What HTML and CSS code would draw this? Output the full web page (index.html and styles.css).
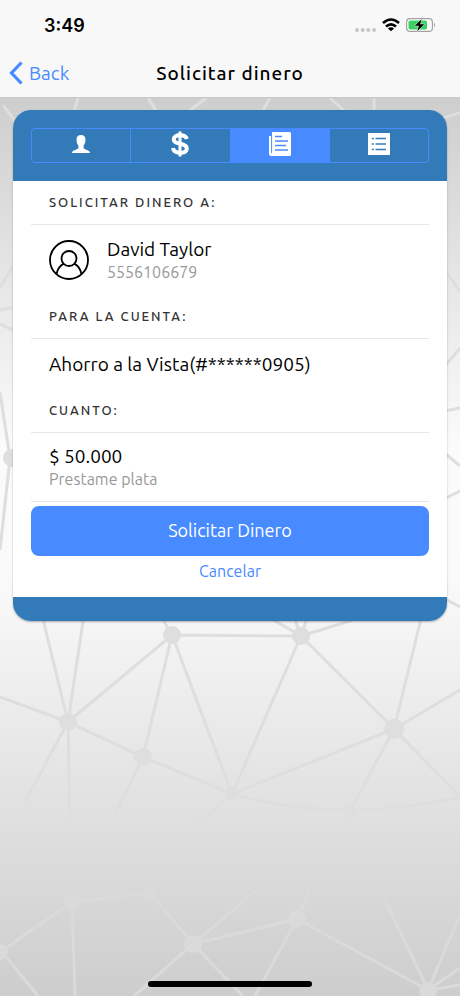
FILE: index.html
```html
<!DOCTYPE html>
<html lang="es">
<head>
    <meta charset="UTF-8">
    <meta name="viewport" content="width=device-width, initial-scale=1.0">
    <title>Solicitar dinero</title>
    <link rel="stylesheet" href="styles.css">
</head>
<body>

    <!-- Network pattern behind the content -->
    <svg class="backdrop" viewBox="0 0 460 996" preserveAspectRatio="xMidYMid slice" aria-hidden="true">
        <g class="lines">
            <path d="M172 635L301 636L394 729L232 794L172 635L68 722L143 757L172 635M143 757L232 794L301 636M172 635L162 618M301 636L270 618M301 636L293 615M301 636L308 615M301 636L353 620"/>
            <path d="M68 722L0 697M68 722L42 615M68 722L84 615M68 722L25 802M68 722L70 830M143 757L115 815M394 729L422 615M394 729L460 690M394 729L350 811M394 729L460 797M232 794Q340 825 460 797M232 794L190 830"/>
            <path class="soft" d="M0 952L72 902L150 893L193 944L297 919L428 990L385 900M2 952L38 996M72 902L75 996M193 944L134 996M193 944L243 996M193 944L280 870M297 919L255 996M297 919L312 885M428 990L460 915M428 990L460 968M428 990L460 985"/>
            <path d="M0 392L10 458L0 550M0 288L20 254M0 310L20 306M0 324L20 333M3 105L20 128M78 98L74 112M148 98L158 114M206 98L188 112M270 98L262 112M330 98L348 114M374 98L374 112M440 119L460 113"/>
            <path d="M440 262L460 292M440 372L460 348M440 412L460 408M440 449L460 466M440 501L460 491M440 596L460 607"/>
        </g>
        <g class="nodes">
            <circle cx="172" cy="635" r="9"/>
            <circle cx="301" cy="636" r="9"/>
            <circle cx="68" cy="722" r="9"/>
            <circle cx="143" cy="757" r="9"/>
            <circle cx="394" cy="729" r="10"/>
            <circle cx="232" cy="793" r="7"/>
            <circle cx="350" cy="811" r="6"/>
            <circle cx="12" cy="458" r="9"/>
            <g class="soft">
                <circle cx="0" cy="952" r="8"/>
                <circle cx="72" cy="902" r="8"/>
                <circle cx="150" cy="893" r="7"/>
                <circle cx="193" cy="944" r="9"/>
                <circle cx="297" cy="919" r="9"/>
                <circle cx="428" cy="991" r="9"/>
            </g>
        </g>
    </svg>

    <header class="top-bar">
        <div class="status-bar">
            <span class="time">3:49</span>
            <div class="status-icons">
                <svg width="21" height="4" viewBox="0 0 21 4" fill="#c6c6c6">
                    <circle cx="2" cy="2" r="2"/><circle cx="7.7" cy="2" r="2"/><circle cx="13.3" cy="2" r="2"/><circle cx="19" cy="2" r="2"/>
                </svg>
                <svg class="wifi" width="18" height="14" viewBox="0 0 18 14" fill="none" stroke="#000" stroke-width="2.6">
                    <path d="M1 5Q9 -2 17 5"/>
                    <path d="M4 8.5Q9 4.2 14 8.5"/>
                    <path d="M9 13.2L5.9 10.5Q9 8 12.1 10.5Z" fill="#000" stroke="none"/>
                </svg>
                <svg class="battery" width="30" height="14" viewBox="0 0 30 14">
                    <rect x="0.6" y="0.6" width="25.8" height="12.8" rx="3.5" fill="#fff" stroke="#a0a0a0" stroke-width="1.2"/>
                    <rect x="2.5" y="2.5" width="18.5" height="9" rx="1.8" fill="#3ad160"/>
                    <path d="M28 4.5Q30 7 28 9.5Z" fill="#a0a0a0"/>
                    <path d="M15.8 1L8.8 7.8H12.8L11.2 13.2L18.3 6.2H14.2Z" fill="#000" stroke="#fff" stroke-width="1" paint-order="stroke"/>
                </svg>
            </div>
        </div>
        <div class="nav-bar">
            <button type="button" class="back">
                <svg width="14" height="24" viewBox="0 0 14 24" fill="none" stroke="currentColor" stroke-width="3.2"><path d="M12.5 1.5L2.5 12L12.5 22.5"/></svg>
                Back
            </button>
            <h1>Solicitar dinero</h1>
        </div>
    </header>

    <main>
        <section class="card">
            <div class="card-header">
                <nav class="segment">
                    <button type="button" aria-label="Persona">
                        <svg width="18" height="18" viewBox="0 0 18 18" fill="currentColor"><path d="M9 0C11.9 0 13.6 1.8 13.5 4.8C13.4 7.4 12.7 9.4 11.6 10.6V13C11.6 14.8 18 14.6 18 18H0C0 14.6 6.4 14.8 6.4 13V10.6C5.3 9.4 4.6 7.4 4.5 4.8C4.4 1.8 6.1 0 9 0Z"/></svg>
                    </button>
                    <button type="button" aria-label="Monto">
                        <svg width="18" height="26" viewBox="0 0 18 26" fill="none" stroke="currentColor" stroke-width="4"><path d="M15.8 8C15.2 5.5 12.8 4.3 9 4.3C5 4.3 2.8 5.8 2.8 8.4C2.8 11.2 5.2 11.9 9 12.7C13 13.5 15.8 14.5 15.8 17.4C15.8 20.2 13 21.7 9 21.7C4.8 21.7 2.4 20 2 17"/><path d="M9 0.5V25.5" stroke-width="3"/></svg>
                    </button>
                    <button type="button" class="active" aria-label="Detalle">
                        <svg width="22" height="24" viewBox="0 0 22 24"><path d="M3 0H20.5Q22 0 22 1.5V22.5Q22 24 20.5 24H2Q0 24 0 22V4H3Z" fill="currentColor"/><path d="M2.6 4V21" stroke="#488aff" stroke-width="1"/><path d="M6 4.5H13M6 9H19M6 13.5H17M6 18H19" stroke="#488aff" stroke-width="1.4"/></svg>
                    </button>
                    <button type="button" aria-label="Lista">
                        <svg width="22" height="22" viewBox="0 0 22 22"><path d="M0 0H22V22H0Z" fill="currentColor"/><path d="M7.5 5.5H18M7.5 11H18M7.5 16.5H18M3.8 5.5H5.8M3.8 11H5.8M3.8 16.5H5.8" stroke="#327bb8" stroke-width="1.4"/></svg>
                    </button>
                </nav>
            </div>

            <div class="card-content">
                <h2>Solicitar dinero a:</h2>
                <div class="item">
                    <svg class="avatar" width="40" height="40" viewBox="0 0 40 40" fill="none" stroke="#000" stroke-width="1.8"><circle cx="20" cy="20" r="19"/><circle cx="20" cy="18.5" r="7.5"/><path d="M7.5 34.2C8.3 29.2 11 25.6 14.8 23.6M25.2 23.6C29 25.6 31.7 29.2 32.5 34.2"/></svg>
                    <div>
                        <p class="name">David Taylor</p>
                        <p class="note">5556106679</p>
                    </div>
                </div>

                <h2>Para la cuenta:</h2>
                <div class="item single">
                    <p class="name">Ahorro a la Vista(#******0905)</p>
                </div>

                <h2>Cuanto:</h2>
                <div class="item last">
                    <div>
                        <p class="name">$ 50.000</p>
                        <p class="note">Prestame plata</p>
                    </div>
                </div>

                <button type="button" class="submit">Solicitar Dinero</button>
                <button type="button" class="cancel">Cancelar</button>
            </div>

            <div class="card-footer"></div>
        </section>
    </main>

    <div class="home-indicator"></div>

</body>
</html>
```

FILE: styles.css
```css
* {
    box-sizing: border-box;
}

body {
    margin: 0;
    position: relative;
    min-height: 100vh;
    font-family: Ubuntu, "Noto Sans", sans-serif;
    color: #000;
    background: linear-gradient(#cecece 10%, #e2e2e2 25%, #fbfbfb 45%, #fafafa 58%, #e4e4e4 78%, #cdcdcd 100%);
}

h1, h2, p {
    margin: 0;
}

button {
    font-family: inherit;
    border: none;
    background: none;
    padding: 0;
    cursor: pointer;
}

svg {
    display: block;
}

/* Background pattern */
.backdrop {
    position: absolute;
    top: 0;
    left: 0;
    width: 100%;
    height: 100%;
    z-index: -1;
}

.lines {
    fill: none;
    stroke: #dedede;
    stroke-width: 3;
}

.nodes {
    fill: #dedede;
}

.lines .soft {
    stroke: #dadada;
}

.nodes .soft {
    fill: #dadada;
}

/* Top bar */
.top-bar {
    background-color: #f8f8f8;
    border-bottom: 1px solid #c8c8c8;
}

.status-bar {
    display: flex;
    justify-content: space-between;
    align-items: center;
    height: 50px;
    padding: 0 24px 0 44px;
}

.time {
    font-family: Inter, sans-serif;
    font-size: 18px;
    font-weight: 600;
}

.status-icons {
    display: flex;
    align-items: center;
    gap: 6px;
}

.status-icons svg:first-child {
    margin-top: 10px;
}

.nav-bar {
    display: grid;
    grid-template-columns: 1fr auto 1fr;
    align-items: center;
    height: 47px;
    padding: 0 9px 2px;
}

.back {
    display: flex;
    align-items: center;
    justify-self: start;
    gap: 6px;
    color: #488aff;
    font-size: 19px;
}

h1 {
    font-size: 19px;
    font-weight: 500;
    letter-spacing: 1px;
}

/* Card */
.card {
    margin: 12px 13px;
    border-radius: 18px;
    overflow: hidden;
    background-color: #fff;
    box-shadow: 0 1px 2px rgba(0, 0, 0, 0.3);
}

.card-header {
    padding: 18px;
    background-color: #327bb8;
}

.segment {
    display: flex;
    height: 35px;
    border: 1px solid #488aff;
    border-radius: 4px;
    overflow: hidden;
}

.segment button {
    flex: 1;
    display: flex;
    align-items: center;
    justify-content: center;
    padding-bottom: 3px;
    color: #fff;
}

.segment button + button {
    border-left: 1px solid #488aff;
}

.segment .active {
    background-color: #488aff;
}

.card-content {
    padding: 0 18px 11px;
}

h2 {
    padding: 0 18px;
    line-height: 43px;
    border-bottom: 1px solid #e8e8e8;
    font-size: 13px;
    font-weight: 500;
    letter-spacing: 2px;
    text-transform: uppercase;
    color: #333;
}

.item {
    display: flex;
    align-items: center;
    gap: 18px;
    height: 70px;
    padding: 0 18px;
}

.item.single {
    height: 50px;
}

.item.last {
    height: 69px;
    border-bottom: 1px solid #e8e8e8;
}

.name {
    font-size: 19px;
    line-height: 24px;
}

.note {
    font-size: 16px;
    line-height: 22px;
    color: #999;
}

.submit {
    display: block;
    width: 100%;
    height: 50px;
    margin-top: 4px;
    padding-bottom: 2px;
    border-radius: 8px;
    background-color: #488aff;
    color: #fff;
    font-size: 18px;
}

.cancel {
    display: block;
    width: 100%;
    height: 30px;
    color: #488aff;
    font-size: 16px;
}

.card-footer {
    height: 24px;
    background-color: #327bb8;
}

.home-indicator {
    position: absolute;
    bottom: 9px;
    left: 50%;
    width: 164px;
    height: 6px;
    margin-left: -82px;
    border-radius: 3px;
    background-color: #000;
}
```
